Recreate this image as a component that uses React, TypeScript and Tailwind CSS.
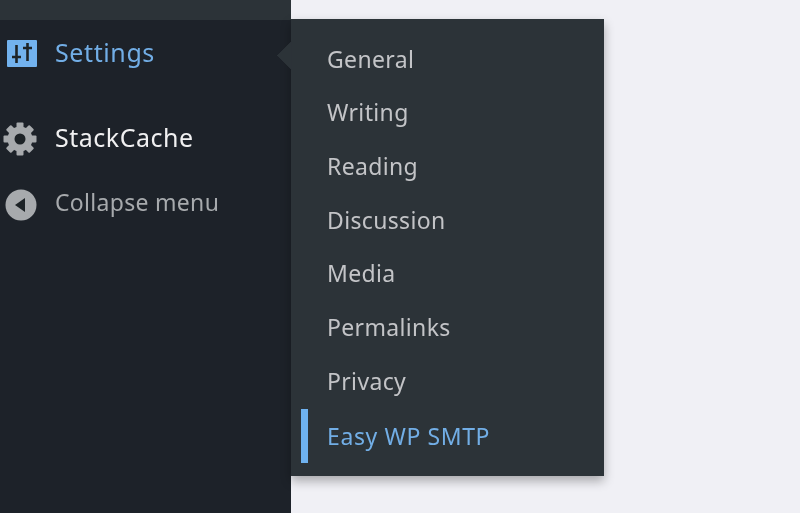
export default function App() {
  const items = ["General", "Writing", "Reading", "Discussion", "Media", "Permalinks", "Privacy"];
  return (
    <div className="flex h-[513px] w-[800px] overflow-hidden bg-[#f0f0f5] font-['Noto_Sans',sans-serif] text-[23px] tracking-[0.35px] blur-[0.4px]">
      <aside className="flex w-[291px] flex-col bg-[#1d2229]">
        <div className="h-[20px] bg-[#2c3338]" />
        <div className="flex h-[66px] items-center pl-[7px] text-[25px] tracking-[0.6px] text-[#72aee6]">
          <svg width="30" height="27" viewBox="0 0 30 27" className="mr-[18px]">
            <rect width="30" height="27" rx="1" fill="#72b2ee" />
            <path d="M9.5 5v18M5 17h9M20.5 3v18M16 8h9" stroke="#1d2327" strokeWidth="2.6" fill="none" />
          </svg>
          <span>Settings</span>
        </div>
        <div className="mt-[20px] flex h-[64px] items-center pl-[3px] text-[25px] tracking-[0.5px] text-[#f0f0f1]">
          <svg width="34" height="34" viewBox="0 0 34 34" className="mr-[18px] mt-[2px]">
            <g fill="#a7aaad">
              <circle cx="17" cy="17" r="12.5" />
              <g>
                <rect x="13.5" y="0.5" width="7" height="33" rx="1" />
                <rect x="13.5" y="0.5" width="7" height="33" rx="1" transform="rotate(45 17 17)" />
                <rect x="13.5" y="0.5" width="7" height="33" rx="1" transform="rotate(90 17 17)" />
                <rect x="13.5" y="0.5" width="7" height="33" rx="1" transform="rotate(135 17 17)" />
              </g>
            </g>
            <circle cx="17" cy="17" r="5.5" fill="#1d2327" />
          </svg>
          <span>StackCache</span>
        </div>
        <div className="flex h-[64px] items-center pl-[5px] tracking-[0.3px] text-[#a7aaad]">
          <svg width="32" height="32" viewBox="0 0 32 32" className="mr-[18px] mt-[6px]">
            <circle cx="16" cy="16" r="15.5" fill="#a7aaad" />
            <path d="M10 16l10-7v14z" fill="#1d2327" />
          </svg>
          <span>Collapse menu</span>
        </div>
      </aside>
      <main className="flex-1 pt-[19px]">
        <nav className="relative flex h-[457px] w-[313px] flex-col bg-[#2c3338] pt-[13px] text-[#c3c4c7] shadow-[0_5px_10px_rgba(0,0,0,0.3)]">
          <div className="absolute left-[-10.5px] top-[25.5px] h-[21px] w-[21px] rotate-45 bg-[#2c3338] [clip-path:polygon(0_0,0_100%,100%_100%)]" />
          {items.map((t) => (
            <div key={t} className="flex h-[53.7px] items-center pl-[36px]">{t}</div>
          ))}
          <div className="relative ml-[10px] mt-[1px] flex h-[54px] items-center border-l-[7px] border-[#6fb2ef] pl-[19px] tracking-[0.6px] text-[#72aee6]">
            Easy WP SMTP
          </div>
        </nav>
      </main>
    </div>
  );
}
